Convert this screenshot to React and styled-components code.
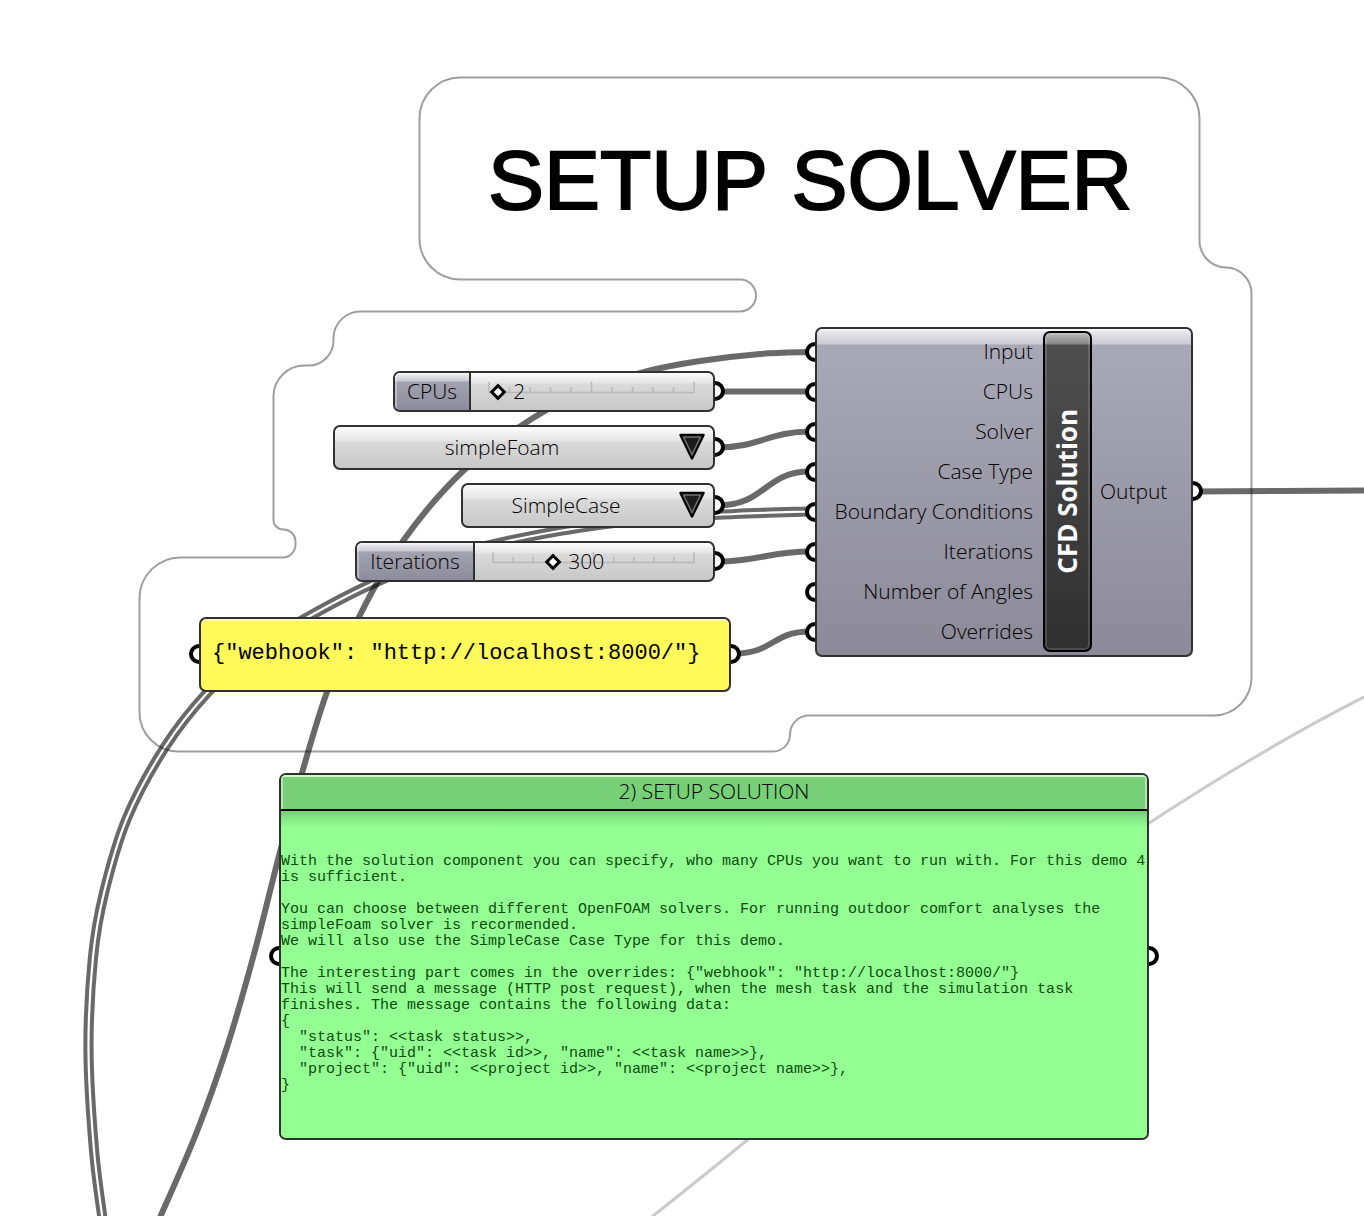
import React, { useState } from "react";
import styled, { createGlobalStyle } from "styled-components";

const GlobalStyle = createGlobalStyle`
  * { box-sizing: border-box; }
  body { margin: 0; background: #fff; color: #000; }
`;

const sans = `"Open Sans", "Noto Sans", sans-serif`;
const mono = `"Liberation Mono", monospace`;

const Canvas = styled.main`
  position: relative;
  min-height: 1216px;
  overflow: hidden;
  background: #fff;
  font-family: ${sans};
  font-size: 21px;
  font-weight: 350;
  line-height: 24px;
`;

const WireLayer = styled.svg`
  position: absolute;
  inset: 0;
  width: 100%;
  height: 100%;
  fill: none;
`;

const Title = styled.h1`
  position: absolute;
  left: 488px;
  top: 132px;
  margin: 0;
  font: 400 84px/96px "Liberation Sans", Arial, sans-serif;
  font-kerning: none;
  white-space: nowrap;
  -webkit-text-stroke: 2px #000;
`;

/* Anchors a node on the canvas; its ports sit behind its frame. */
const Node = styled.div`
  position: absolute;
  isolation: isolate;
  left: ${(p) => p.$x}px;
  top: ${(p) => p.$y}px;
  width: ${(p) => p.$w}px;
`;

const Port = styled.span`
  position: absolute;
  z-index: -1;
  top: 50%;
  margin-top: -11px;
  ${(p) => p.$side}: -10px;
  width: 20px;
  height: 20px;
  border: 4px solid #000;
  border-radius: 50%;
  background: #fff;
`;

const Frame = styled.div`
  display: flex;
  width: 100%;
  height: ${(p) => p.$h}px;
  border: 2px solid #303030;
  border-radius: 7px;
  overflow: hidden;
`;

const SliderFrame = styled(Frame)`
  background: linear-gradient(#fcfcfc, #e4e4e4 10px, #dadada 11px, #c8c8c8);
`;

const SliderLabel = styled.label`
  flex: none;
  display: flex;
  align-items: center;
  justify-content: center;
  width: ${(p) => p.$w}px;
  padding-bottom: 2px;
  border-right: 2px solid #303030;
  background: linear-gradient(#f0f0f4, #c8c8d0 8px, #a2a2b0 9px, #8e8c9c);
  box-shadow: inset 1px 1px 0 1px rgba(255, 255, 255, 0.35);
`;

const SliderBody = styled.div`
  flex: 1;
  display: flex;
  align-items: center;
  padding: 0 19px 0 18px;
`;

const Track = styled.div`
  position: relative;
  flex: 1;
  height: 36px;
`;

const Ticks = styled.svg`
  position: absolute;
  inset: 0;
  width: 100%;
  height: 100%;
  overflow: visible;
  stroke: #b8b8b8;
  stroke-width: 1.5px;
`;

const Range = styled.input`
  position: absolute;
  top: 0;
  left: -6px;
  width: calc(100% + 12px);
  height: 36px;
  margin: 0;
  appearance: none;
  background: transparent;
  &::-webkit-slider-thumb {
    appearance: none;
    width: 12px;
    height: 12px;
    border: 3px solid #000;
    background: #fff;
    transform: rotate(45deg);
  }
`;

const SliderValue = styled.output`
  position: absolute;
  top: 5px;
  margin-left: 15px;
  pointer-events: none;
`;

const SelectFrame = styled(Frame)`
  background: linear-gradient(#fcfcfc, #e4e4e4 14px, #dadada 15px, #c8c8c8);
`;

const Select = styled.select`
  flex: 1;
  appearance: none;
  border: 0;
  padding: 0 44px 2px 0;
  background: transparent;
  color: #000;
  font: inherit;
  text-align: center;
  text-align-last: center;
`;

const Arrow = styled.svg`
  position: absolute;
  right: 9px;
  top: 8px;
  width: 28px;
  height: 28px;
  pointer-events: none;
`;

const ComponentFrame = styled(Frame)`
  background: linear-gradient(#ececf0, #cbcbd2 15px, #a9a8b6 16px, #8c8a98);
  box-shadow: inset 0 2px 0 rgba(255, 255, 255, 0.5);
`;

const Inputs = styled.ul`
  flex: none;
  width: 226px;
  margin: 0;
  padding: 2px 0 0;
  list-style: none;
`;

const InputRow = styled.li`
  display: flex;
  align-items: center;
  justify-content: flex-end;
  height: 40px;
  padding-right: 10px;
`;

const NamePlate = styled.div`
  flex: none;
  display: flex;
  align-items: center;
  justify-content: center;
  width: 49px;
  height: 321px;
  margin-top: 2px;
  padding-right: 2px;
  border: 2px solid #000;
  border-radius: 7px;
  background: linear-gradient(#b8b8b8, #868686 11px, #4e4e4e 12px, #303030);
  box-shadow: inset 0 0 0 2px rgba(255, 255, 255, 0.14);
`;

const PlateText = styled.h2`
  margin: 0;
  color: #fff;
  font: 700 26px/32px ${sans};
  writing-mode: vertical-rl;
  transform: rotate(180deg);
  white-space: nowrap;
`;

const Output = styled.div`
  flex: 1;
  display: flex;
  align-items: center;
  padding: 0 0 2px 8px;
`;

const InputPorts = styled.div`
  position: absolute;
  z-index: -1;
  inset: 6px auto auto 0;
`;

const PortSlot = styled.div`
  position: relative;
  height: 40px;
`;

const NoteFrame = styled(Frame)`
  align-items: center;
  padding: 0 11px 2px;
  background: #fff95a;
  box-shadow: inset 0 2px 1px rgba(255, 255, 255, 0.6);
`;

const Code = styled.pre`
  margin: 0;
  font: 400 22px/26px ${mono};
`;

const PanelFrame = styled(Frame)`
  flex-direction: column;
  background: #93ff93;
`;

const PanelTitle = styled.h2`
  flex: none;
  height: 36px;
  margin: 0;
  border-bottom: 2px solid #000;
  background: #77cf77;
  box-shadow: inset 0 2px 0 #d4f5d4, inset 2px 0 0 #b4e8b4, inset -2px 0 0 #b4e8b4;
  font: 350 21px/32px ${sans};
  text-align: center;
`;

const PanelText = styled.pre`
  flex: 1;
  margin: 0;
  padding-top: 43px;
  background: linear-gradient(#76cd76, #85e885 8px, #93ff93 17px);
  color: #0b4a0b;
  font: 400 15px/16px ${mono};
`;

/* Smooth curve through a list of points, optionally shifted along its normals. */
function curve(points, shift = 0) {
  const moved = points.map(([x, y], i) => {
    const a = points[Math.max(i - 1, 0)];
    const b = points[Math.min(i + 1, points.length - 1)];
    const dx = b[0] - a[0];
    const dy = b[1] - a[1];
    const len = Math.hypot(dx, dy);
    return [x - (dy / len) * shift, y + (dx / len) * shift];
  });
  const at = (i) => moved[Math.min(Math.max(i, 0), moved.length - 1)];
  let d = `M${at(0)}`;
  for (let i = 0; i < moved.length - 1; i++) {
    const [p0, p1, p2, p3] = [at(i - 1), at(i), at(i + 1), at(i + 2)];
    const c1 = [p1[0] + (p2[0] - p0[0]) / 6, p1[1] + (p2[1] - p0[1]) / 6];
    const c2 = [p2[0] - (p3[0] - p1[0]) / 6, p2[1] - (p3[1] - p1[1]) / 6];
    d += `C${c1} ${c2} ${p2}`;
  }
  return d;
}

const inputWire = [
  [808, 352], [760, 354], [700, 361], [648, 371], [590, 390], [533, 418], [463, 471],
  [403, 541], [359, 617], [327, 692], [302, 773], [280, 852],
  [254, 954], [227, 1047], [196, 1134], [158, 1222],
];

const boundaryWire = [
  [808, 511.5], [735, 514], [660, 518], [578, 528], [508, 541], [440, 558], [374, 583],
  [308, 617], [255, 650], [208, 692], [165, 747], [127, 818], [104, 893], [93, 957],
  [88.5, 1050], [94, 1150], [103, 1222],
];

const wires = [
  curve(inputWire),
  "M718 391.5H810",
  "M718 447.5C758 447.5 770 431.5 810 431.5",
  "M718 505.5C765 505.5 765 471.5 810 471.5",
  "M718 561.5C758 561.5 770 551.5 810 551.5",
  "M734 653.5C774 653.5 772 631.5 810 631.5",
  "M1196 491.5C1250 491.5 1310 490.5 1364 490.5H3000",
];

const groupOutline =
  "M460 77.5H1159A41 41 0 0 1 1199.5 118V240A27 27 0 0 0 1226 267.5A26 26 0 0 1 1251.5 294" +
  "V677A38 38 0 0 1 1214 715.5H809A19 19 0 0 0 790 734A17 17 0 0 1 773 751.5H179A39 39 0 0 1 139.5 712" +
  "V598A41 41 0 0 1 181 557.5H283A13 13 0 0 0 295.5 545V541A12 12 0 0 0 284 529.5A10 10 0 0 1 273.5 518" +
  "V396A31 31 0 0 1 305 365.5H308A25 25 0 0 0 333.5 340V338A27 27 0 0 1 360 311.5H740A16 16 0 0 0 740 279.5" +
  "H460A41 41 0 0 1 419.5 239V118A41 41 0 0 1 460 77.5Z";

function Wires() {
  return (
    <WireLayer aria-hidden="true">
      <g stroke="#cbcbcb" strokeWidth="3">
        <path d="M1140 829C1210 783 1290 734 1372 693" />
        <path d="M648 1220C682 1193 716 1166 752 1136" />
      </g>
      <g stroke="#000" strokeOpacity="0.59">
        {wires.map((d) => (
          <path key={d} d={d} strokeWidth="6" />
        ))}
        <path d={curve(boundaryWire, 3.1)} strokeWidth="4" />
        <path d={curve(boundaryWire, -3.1)} strokeWidth="4" />
      </g>
      <path d={groupOutline} stroke="#000" strokeOpacity="0.38" strokeWidth="2" />
    </WireLayer>
  );
}

function Slider({ id, label, labelWidth, min, max, initial, ...place }) {
  const [value, setValue] = useState(initial);
  const share = ((value - min) / (max - min)) * 100;
  return (
    <Node {...place}>
      <Port $side="right" />
      <SliderFrame $h={41}>
        <SliderLabel htmlFor={id} $w={labelWidth}>{label}</SliderLabel>
        <SliderBody>
          <Track>
            <Ticks aria-hidden="true">
              <line x1="0" x2="100%" y1="18.5" y2="18.5" />
              {Array.from({ length: 11 }, (_, i) => (
                <line key={i} x1={`${i * 10}%`} x2={`${i * 10}%`} y1={i % 5 ? 13 : 8} y2="19" />
              ))}
            </Ticks>
            <Range
              id={id}
              type="range"
              min={min}
              max={max}
              value={value}
              onChange={(e) => setValue(Number(e.target.value))}
            />
            <SliderValue htmlFor={id} style={{ left: `${share}%` }}>{value}</SliderValue>
          </Track>
        </SliderBody>
      </SliderFrame>
    </Node>
  );
}

function Dropdown({ label, options, ...place }) {
  return (
    <Node {...place}>
      <Port $side="right" />
      <SelectFrame $h={45}>
        <Select aria-label={label} defaultValue={options[0]}>
          {options.map((o) => (
            <option key={o}>{o}</option>
          ))}
        </Select>
      </SelectFrame>
      <Arrow viewBox="0 0 28 28" aria-hidden="true">
        <path d="M2.5 2H25.5L14 25.5Z" fill="#1c1c1c" stroke="#000" strokeWidth="2.5" strokeLinejoin="round" />
        <path d="M5.5 4H22.5L14 21.5Z" fill="#1c1c1c" stroke="#707070" strokeWidth="1.5" />
      </Arrow>
    </Node>
  );
}

const inputs = [
  "Input", "CPUs", "Solver", "Case Type", "Boundary Conditions",
  "Iterations", "Number of Angles", "Overrides",
];

const panelText = `With the solution component you can specify, who many CPUs you want to run with. For this demo 4
is sufficient.

You can choose between different OpenFOAM solvers. For running outdoor comfort analyses the
simpleFoam solver is recormended.
We will also use the SimpleCase Case Type for this demo.

The interesting part comes in the overrides: {"webhook": "http://localhost:8000/"}
This will send a message (HTTP post request), when the mesh task and the simulation task
finishes. The message contains the following data:
{
  "status": <<task status>>,
  "task": {"uid": <<task id>>, "name": <<task name>>},
  "project": {"uid": <<project id>>, "name": <<project name>>},
}`;

export default function App() {
  return (
    <>
      <GlobalStyle />
      <Canvas>
        <Wires />
        <Title>SETUP SOLVER</Title>

        <Slider id="cpus" label="CPUs" labelWidth={76} min={1} max={23} initial={2} $x={393} $y={371} $w={322} />
        <Dropdown label="Solver" options={["simpleFoam"]} $x={333} $y={425} $w={382} />
        <Dropdown label="Case Type" options={["SimpleCase"]} $x={461} $y={483} $w={254} />
        <Slider id="iterations" label="Iterations" labelWidth={118} min={0} max={1000} initial={300} $x={355} $y={541} $w={360} />

        <Node $x={199} $y={617} $w={532}>
          <Port $side="left" />
          <Port $side="right" />
          <NoteFrame $h={75}>
            <Code>{`{"webhook": "http://localhost:8000/"}`}</Code>
          </NoteFrame>
        </Node>

        <Node $x={815} $y={327} $w={378}>
          <InputPorts>
            {inputs.map((name) => (
              <PortSlot key={name}>
                <Port $side="left" />
              </PortSlot>
            ))}
          </InputPorts>
          <Port $side="right" />
          <ComponentFrame $h={330}>
            <Inputs>
              {inputs.map((name) => (
                <InputRow key={name}>{name}</InputRow>
              ))}
            </Inputs>
            <NamePlate>
              <PlateText>CFD Solution</PlateText>
            </NamePlate>
            <Output>Output</Output>
          </ComponentFrame>
        </Node>

        <Node $x={279} $y={773} $w={870}>
          <Port $side="left" />
          <Port $side="right" />
          <PanelFrame $h={367}>
            <PanelTitle>2) SETUP SOLUTION</PanelTitle>
            <PanelText>{panelText}</PanelText>
          </PanelFrame>
        </Node>
      </Canvas>
    </>
  );
}
